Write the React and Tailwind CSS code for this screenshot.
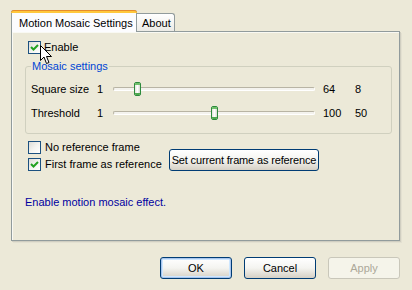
import React from 'react';

const FONT = { fontFamily: '"Liberation Sans", Arial, sans-serif' };

function Check({ checked }) {
    return (
        <span className="relative w-[13px] h-[13px] border border-[#1c5180] bg-gradient-to-br from-[#dcdcd7] via-[#f3f3ef] to-white shrink-0">
            {checked && (
                <svg className="absolute left-[1px] top-[1px]" width="9" height="9" viewBox="0 0 9 9">
                    <path d="M1 4 L3.5 6.5 L8 2" stroke="#21a121" strokeWidth="2" fill="none" />
                </svg>
            )}
        </span>
    );
}

function Slider({ pos }) {
    // pos is the thumb's left offset on the track, in px
    return (
        <div className="relative w-[202px] h-[14px] flex items-center shrink-0">
            <div className="w-full h-[4px] border border-[#b8b4a4] border-b-white border-r-white bg-[#f4f3ee] rounded-[2px]" />
            <div
                className="absolute top-0 w-[7px] h-[14px] rounded-[2px] border border-[#2c8a3c] bg-gradient-to-r from-[#e4e4dc] via-white to-[#d8d8d0] overflow-hidden"
                style={{ left: pos }}
            >
                <div className="h-[2px] bg-[#6fc06a]" />
                <div className="absolute bottom-0 left-0 right-0 h-[2px] bg-[#4fa94f]" />
            </div>
        </div>
    );
}

function XPButton({ children, className = '', def, disabled }) {
    return (
        <div
            className={`h-[22px] rounded-[3px] border flex items-center justify-center whitespace-nowrap ${
                disabled
                    ? 'border-[#c9c7ba] bg-[#f5f4ea] text-[#aca899]'
                    : 'border-[#003c74] bg-gradient-to-b from-white via-[#f4f4f0] to-[#d6d0c5] text-black'
            } ${def ? 'shadow-[inset_0_0_0_1px_#a8c4ec,inset_0_0_0_2px_#cee7ff]' : ''} ${className}`}
        >
            {children}
        </div>
    );
}

export default function App() {
    return (
        <div className="relative w-[412px] h-[290px] bg-[#ece9d8] text-[11px] text-black overflow-hidden whitespace-nowrap" style={FONT}>
            {/* tabs */}
            <div className="flex items-end pl-[11px] pt-[10px] h-[32px]">
                <div className="relative z-10 w-[126px] h-[22px] bg-[#fcfcfe] border border-b-0 border-[#919b9c] rounded-t-[3px] flex items-center pl-[7px]">
                    <div className="absolute -top-px -left-px -right-px h-[3px] rounded-t-[3px] bg-[#ffc83c] border-t border-[#e68b2c]" />
                    <span className="mt-[3px]">Motion Mosaic Settings</span>
                </div>
                <div className="w-[38px] h-[18px] mb-[1px] bg-gradient-to-b from-white to-[#ecebe6] border border-b-0 border-l-0 border-[#919b9c] rounded-tr-[3px] flex items-center pl-[5px]">
                    <span className="mt-[2px]">About</span>
                </div>
            </div>

            {/* panel */}
            <div className="ml-[11px] -mt-px w-[389px] h-[210px] border border-[#919b9c] shadow-[1px_1px_0_#d0cec1,2px_2px_0_#e3e0d1] bg-[#ece9d8]">
                <div className="h-full border-t border-l border-white/70 pl-[15px] pt-[8px] flex flex-col">
                    <div className="flex items-center gap-[3px] h-[13px]">
                        <Check checked />
                        <span>Enable</span>
                    </div>

                    <fieldset className="ml-[-3px] mt-[5px] w-[367px] h-[75px] border border-[#d0d0bf] rounded-[3px] pl-[5px] pr-0 pt-0">
                        <legend className="px-[1px] text-[#0046d5] leading-[14px]">Mosaic settings</legend>
                        <div className="flex items-center h-[14px] mt-[9px]">
                            <span className="w-[66px]">Square size</span>
                            <span className="w-[16px]">1</span>
                            <Slider pos={21} />
                            <span className="ml-[8px] w-[32px]">64</span>
                            <span>8</span>
                        </div>
                        <div className="flex items-center h-[14px] mt-[10px]">
                            <span className="w-[66px]">Threshold</span>
                            <span className="w-[16px]">1</span>
                            <Slider pos={98} />
                            <span className="ml-[8px] w-[32px]">100</span>
                            <span>50</span>
                        </div>
                    </fieldset>

                    <div className="flex mt-[7px]">
                        <div className="flex flex-col gap-[4px] w-[141px]">
                            <div className="flex items-center gap-[4px] h-[13px]">
                                <Check />
                                <span>No reference frame</span>
                            </div>
                            <div className="flex items-center gap-[4px] h-[13px]">
                                <Check checked />
                                <span>First frame as reference</span>
                            </div>
                        </div>
                        <XPButton className="mt-[8px] w-[150px] tracking-[-0.15px]">
                            Set current frame as reference
                        </XPButton>
                    </div>

                    <div className="mt-[23px] -ml-[3px] text-[#0000a0]">Enable motion mosaic effect.</div>
                </div>
            </div>

            {/* dialog buttons */}
            <div className="flex justify-end gap-[12px] pr-[12px] mt-[16px]">
                <XPButton def className="w-[72px]">OK</XPButton>
                <XPButton className="w-[72px]">Cancel</XPButton>
                <XPButton disabled className="w-[72px]">Apply</XPButton>
            </div>

            {/* mouse pointer */}
            <svg className="absolute left-[40px] top-[45px]" width="13" height="20" viewBox="0 0 13 20">
                <path d="M0.5 0.5 L0.5 15.5 L4 12 L6.5 18.5 L9 17.5 L6.5 11.5 L11.5 11.5 Z" fill="#fff" stroke="#000" strokeWidth="1" />
            </svg>
        </div>
    );
}
